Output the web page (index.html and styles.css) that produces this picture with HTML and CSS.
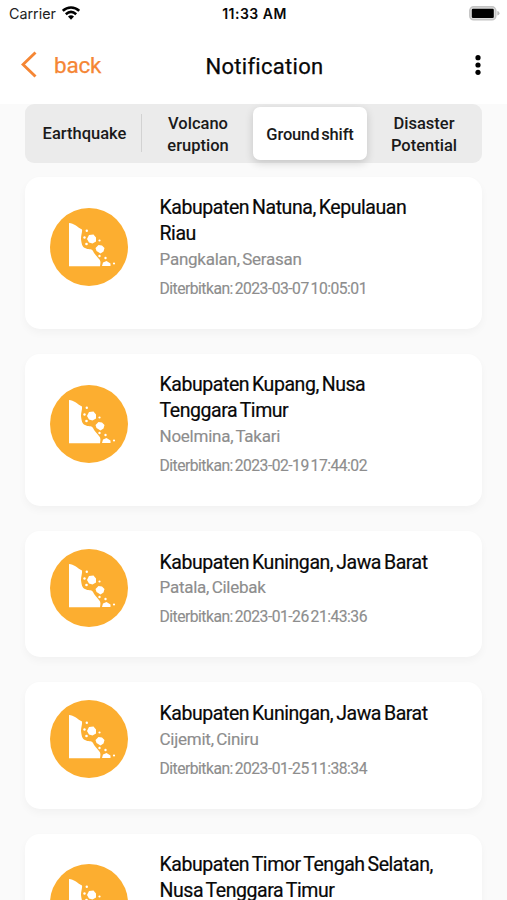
FILE: index.html
```html
<!DOCTYPE html>
<html lang="en">
<head>
<meta charset="utf-8">
<title>Notification</title>
<link rel="stylesheet" href="styles.css">
</head>
<body>
<svg class="defs" width="0" height="0">
  <symbol id="landslide" viewBox="0 0 78 78">
    <circle cx="39" cy="39" r="39" fill="#fcae30"/>
    <path fill="#fff" d="M19 15C24 15 27 19 32 21.500C32.500 24 31 27 31 31C31.500 35 32 39 35 40C38 42 41 40 43 43C44 46 47 48 49 51C51 53 50.500 55 50 58.300H19Z"/>
    <path fill="#fff" d="M39 27L43.500 26.500L46 29.500V33.500L42.500 35.500L39 34.500L37 31ZM48.500 37L52 37.500L54.500 40L53.500 43.500L50.500 45.500L46.500 43L45.500 40ZM53 54.500L56.500 53L60.500 55.500V58H52Z"/>
    <g fill="#fff"><circle cx="36.800" cy="22.700" r="1.200"/><circle cx="34.500" cy="29.500" r="1.200"/><circle cx="36.500" cy="36" r="1.300"/><circle cx="49.500" cy="32.500" r="1.100"/><circle cx="49.500" cy="48" r="1.200"/><circle cx="55.500" cy="50" r="1.200"/><circle cx="64" cy="55.500" r="1.100"/></g>
  </symbol>
</svg>
<header class="header">
  <div class="status">
    <div class="carrier"><span>Carrier</span>
      <svg width="18" height="14" viewBox="0 0 18 14" fill="none" stroke="#000" stroke-width="2.500"><path d="M.8 4.800C5.500.4 12.500.4 17.200 4.800M3.800 8.200C7 5.300 11 5.300 14.200 8.200"/><path d="M6 10.600Q9 8.100 12 10.600L9 13.800Z" fill="#000" stroke="none"/></svg>
    </div>
    <div class="time">11:33 AM</div>
    <svg class="battery" width="31" height="15" viewBox="0 0 31 15"><rect x=".8" y=".8" width="26" height="13" rx="3.800" fill="#ddd" stroke="#c4c4c4" stroke-width="1.500"/><rect x="2.800" y="2.700" width="22" height="9.300" rx="1.200"/><path d="M28.300 5Q30.500 5.500 30.500 7.200T28.300 9.500Z" fill="#bbb"/></svg>
  </div>
  <nav class="nav">
    <div class="back"><svg width="16" height="27" viewBox="0 0 16 27"><path d="M14.500 1.500L2 13.500L14.500 25.500" fill="none" stroke="#f58634" stroke-width="2.900"/></svg><span>back</span></div>
    <h1>Notification</h1>
    <svg class="more" width="6" height="20" viewBox="0 0 6 20"><circle cx="3" cy="2.700" r="2.600"/><circle cx="3" cy="10" r="2.600"/><circle cx="3" cy="17.300" r="2.600"/></svg>
  </nav>
</header>
<main>
  <div class="tabs">
    <div class="tab divided">Earthquake</div>
    <div class="tab">Volcano<br>eruption</div>
    <div class="tab active"><span>Ground shift</span></div>
    <div class="tab">Disaster<br>Potential</div>
  </div>
  <article class="card"><svg class="icon"><use href="#landslide"/></svg><div class="info"><h2>Kabupaten Natuna, Kepulauan<br>Riau</h2><p class="place">Pangkalan, Serasan</p><p class="date">Diterbitkan: 2023-03-07 10:05:01</p></div></article>
  <article class="card"><svg class="icon"><use href="#landslide"/></svg><div class="info"><h2>Kabupaten Kupang, Nusa<br>Tenggara Timur</h2><p class="place">Noelmina, Takari</p><p class="date">Diterbitkan: 2023-02-19 17:44:02</p></div></article>
  <article class="card"><svg class="icon"><use href="#landslide"/></svg><div class="info"><h2>Kabupaten Kuningan, Jawa Barat</h2><p class="place">Patala, Cilebak</p><p class="date">Diterbitkan: 2023-01-26 21:43:36</p></div></article>
  <article class="card"><svg class="icon"><use href="#landslide"/></svg><div class="info"><h2>Kabupaten Kuningan, Jawa Barat</h2><p class="place">Cijemit, Ciniru</p><p class="date">Diterbitkan: 2023-01-25 11:38:34</p></div></article>
  <article class="card last"><svg class="icon"><use href="#landslide"/></svg><div class="info"><h2>Kabupaten Timor Tengah Selatan,<br>Nusa Tenggara Timur</h2></div></article>
</main>
</body>
</html>
```
FILE: styles.css
```css
* { box-sizing: border-box; }
html, body { height: 900px; overflow: hidden; }
body { margin: 0; background: #fafafa; font-family: Roboto, "Liberation Sans", sans-serif; color: #080808; }
h1, h2, p { margin: 0; }
.defs { position: absolute; }
.header { height: 104px; background: #fff; }
.status { height: 28px; padding: 0 7px 2px 9px; display: grid; grid-template-columns: 1fr auto 1fr; align-items: center; font-family: Inter, sans-serif; font-size: 14px; }
.carrier { display: flex; align-items: center; gap: 6px; color: #222; font-size: 14.300px; }
.time { font-weight: 600; font-size: 14px; letter-spacing: .5px; }
.battery { justify-self: end; }
.nav { height: 76px; padding: 0 26px 0 21px; display: grid; grid-template-columns: 1fr auto 1fr; align-items: center; }
.back { display: flex; align-items: center; gap: 17px; color: #f58634; font-size: 22.500px; font-weight: 400; letter-spacing: -.2px; margin-top: -3px; -webkit-text-stroke: .25px; }
h1 { font-size: 22px; line-height: 28px; font-weight: 400; letter-spacing: .3px; margin-left: 27px; margin-top: 2px; -webkit-text-stroke: .25px; }
.more { justify-self: end; margin-top: -3px; }
main { padding: 0 25px; }
.tabs { height: 59px; display: grid; grid-template-columns: 117px 112px 114px 1fr; background: #ebebeb; border-radius: 9px; margin-bottom: 14px; }
.tab { display: flex; align-items: center; justify-content: center; text-align: center; font-size: 16.500px; font-weight: 500; line-height: 22px; margin: 3px 0; color: #1a1a1a; padding-top: 2px; }
.divided { border-right: 1px solid #d2d2d2; margin: 10px 0 11px; padding-left: 3px; }
.tab:last-child { padding-right: 2px; }
.active { background: #fff; border-radius: 7px; box-shadow: 0 3px 8px rgba(0,0,0,.16); word-spacing: -2px; letter-spacing: -.15px; margin: 3px 1px 3px -1px; }
.card { display: flex; align-items: center; padding: 18.300px 24px 31px 25px; margin-bottom: 25px; background: #fff; border-radius: 15px; box-shadow: 0 4px 8px rgba(0,0,0,.035); }
.icon { width: 78px; height: 78px; margin: -2px 31.500px -2px 0; flex: none; }
.info { white-space: nowrap; word-spacing: -1.500px; }
h2 { font-size: 19.500px; line-height: 25.900px; font-weight: 400; letter-spacing: -.44px; -webkit-text-stroke: .2px; }
.place { font-size: 17px; line-height: 25px; color: #8d8d8d; letter-spacing: -.25px; -webkit-text-stroke: .15px; }
.date { font-size: 15.700px; line-height: 19px; margin-top: 7px; color: #8d8d8d; letter-spacing: -.52px; -webkit-text-stroke: .15px; }
.last { align-items: flex-start; margin-bottom: 0; padding-bottom: 0; height: 90px; border-radius: 15px 15px 0 0; }
.last .icon { margin-top: 12px; }
```
